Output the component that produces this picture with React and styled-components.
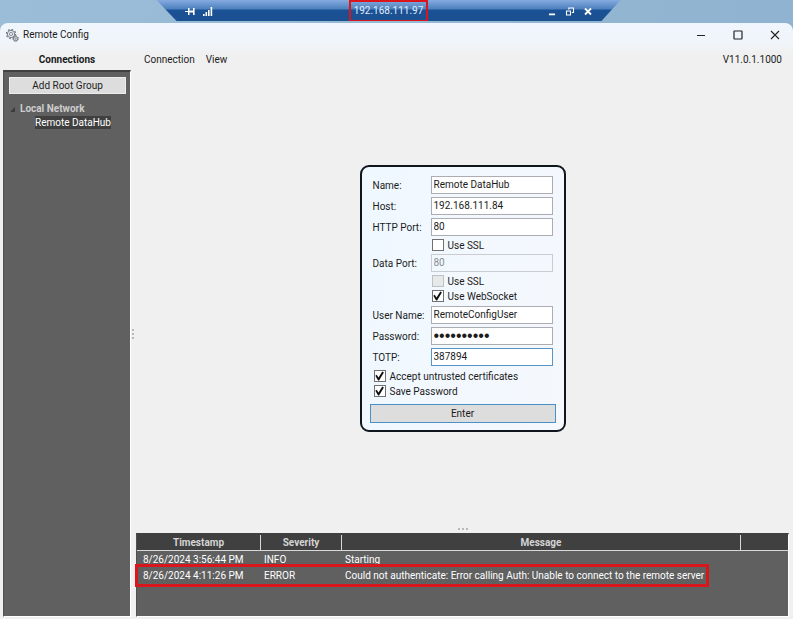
import styled, { createGlobalStyle } from "styled-components";

const GlobalStyle = createGlobalStyle`
    :root {
        --panel-gray: #606060;
        --head-gray: #404040;
        --app-gray: #f0f0f0;
        --mark-red: #d8161c;
        --text: #1c1c1c;
        --font: Roboto, "Open Sans", sans-serif;
    }

    * {
        box-sizing: border-box;
        margin: 0;
        padding: 0;
    }

    body {
        background: #98bbd5;
        color: var(--text);
        font-family: var(--font);
        font-size: 10px;
        line-height: 14px;
    }

    button, input {
        font: inherit;
        color: inherit;
    }
`

const Desktop = styled.div`
    display: flex;
    flex-direction: column;
    align-items: center;
    min-height: 100vh;
    background: linear-gradient(90deg, #9bbdd8, #8fb3d0);
`

const SessionBar = styled.header`
    display: grid;
    grid-template-columns: 1fr auto 1fr;
    align-items: center;
    width: 464px;
    height: 21px;
    margin-right: 16px;
    padding: 0 28px;
    color: #fff;
    background: linear-gradient(#86abe0, #4c80bd 9px, #1b5296 10px, #1b5090);
    clip-path: polygon(0 0, 100% 0, 445px 100%, 20px 100%);
`

const SessionTools = styled.div`
    display: flex;
    gap: 8px;
    justify-content: ${props => props.$end ? "flex-end" : "flex-start"};
`

const SessionButton = styled.button`
    display: flex;
    border: none;
    background: none;
`

const SessionAddress = styled.p`
    align-self: stretch;
    padding: 0 3px;
    border: 2px solid var(--mark-red);
    color: #e4eefb;
    line-height: 18px;
`

const Window = styled.div`
    display: flex;
    flex-direction: column;
    flex: 1;
    align-self: stretch;
    margin-top: 2px;
    border-radius: 8px 8px 0 0;
    background: linear-gradient(#f0f6fd, #f0f5fa 20px, var(--app-gray) 30px);
`

const TitleBar = styled.div`
    display: flex;
    align-items: center;
    gap: 4px;
    height: 24px;
    padding: 0 12px 0 6px;

    h1 {
        flex: 1;
        font-size: 10px;
        font-weight: 400;
    }
`

const WindowButton = styled.button`
    display: flex;
    justify-content: center;
    width: 12px;
    margin-left: 21px;
    border: none;
    background: none;
`

const Body = styled.div`
    display: grid;
    grid-template-columns: 128px 5px 1fr;
    flex: 1;
    padding: 0 4px 2px 3px;
`

const Sidebar = styled.aside`
    display: flex;
    flex-direction: column;

    h2 {
        height: 23px;
        font-size: 10px;
        line-height: 25px;
        text-align: center;
    }
`

const Tree = styled.div`
    flex: 1;
    padding: 5px 4px 0 5px;
    border-top: 2px solid var(--head-gray);
    border-right: 1px solid #fff;
    border-bottom: 1px solid #fff;
    border-left: 1px solid #505050;
    background: var(--panel-gray);
    color: #fff;
`

const RootButton = styled.button`
    width: 100%;
    height: 17px;
    border: 1px solid #ececec;
    background: #dddddd;
    color: var(--text);
    line-height: 15px;
`

const Group = styled.div`
    display: flex;
    align-items: center;
    gap: 4px;
    margin-top: 8px;
    color: #cdcdcd;
    font-weight: 700;
`

const TreeItem = styled.div`
    display: flex;
    padding-left: 26px;

    a {
        background: var(--head-gray);
        color: #fff;
        line-height: 13px;
        text-decoration: none;
    }
`

const Splitter = styled.div`
    display: flex;
    flex-direction: ${props => props.$vertical ? "column" : "row"};
    align-items: ${props => props.$vertical ? "flex-start" : "center"};
    justify-content: center;
    gap: 2px;
    height: ${props => props.$vertical ? "auto" : "9px"};
    padding: ${props => props.$vertical ? "4px 1px 0" : "0"};

    i {
        width: 2px;
        height: 2px;
        background: #b8b8b8;
    }
`

const Main = styled.main`
    display: flex;
    flex-direction: column;
    min-width: 0;
`

const MenuBar = styled.nav`
    display: flex;
    gap: 11px;
    height: 23px;
    padding: 0 7px 0 8px;
    line-height: 25px;

    button {
        border: none;
        background: none;
    }

    span {
        margin-left: auto;
    }
`

const Workspace = styled.div`
    display: flex;
    flex: 1;
    align-items: center;
    justify-content: center;
    padding-top: 2px;
`

const LoginForm = styled.form`
    width: 206px;
    padding: 8px 8px 7px;
    border: 2px solid #10161e;
    border-radius: 9px;
    background: linear-gradient(100deg, #eff8ff, #f5f8fd);
`

const FieldRow = styled.div`
    display: grid;
    grid-template-columns: 58px 122px;
    align-items: center;
    height: 21px;
    padding-left: 3px;

    label {
        padding-top: 2px;
    }
`

const TextInput = styled.input`
    height: 18px;
    padding: 0 2px 1px;
    border: 1px solid ${props => props.$active ? "#5795c9" : "#abadb3"};
    outline: none;
    background: #fff;

    &:disabled {
        border-color: #c9cdd2;
        background: transparent;
        color: #8a8d91;
    }

    &[type="password"] {
        padding-bottom: 0;
        font-family: "Liberation Sans", sans-serif;
        font-size: 16px;
    }
`

const CheckRow = styled.label`
    display: flex;
    align-items: center;
    gap: 4px;
    height: 15px;
    padding-left: ${props => props.$indent ? "62px" : "4px"};

    span {
        padding-top: 1px;
    }
`

const CheckBox = styled.input`
    display: flex;
    appearance: none;
    width: 12px;
    height: 12px;
    border: 1px solid #707070;
    background: #fff;

    &:checked::after {
        content: "";
        flex: 1;
        background: #111;
        clip-path: polygon(8% 48%, 22% 38%, 40% 64%, 78% 6%, 94% 14%, 46% 94%, 36% 94%);
    }

    &:disabled {
        border-color: #bfc2c5;
        background: #e6e8ea;
    }
`

const FormGroup = styled.div`
    margin-top: 1px;
`

const EnterButton = styled.button`
    display: block;
    width: 100%;
    height: 19px;
    margin-top: 5px;
    border: 1px solid #4a90c8;
    background: #dddddd;
    line-height: 17px;
`

const LogPanel = styled.section`
    height: 84px;
    border: 1px solid #fff;
    border-top: 2px solid var(--head-gray);
    border-left: 1px solid #505050;
    background: var(--panel-gray);
    color: #fff;
`

const LogTable = styled.table`
    width: 100%;
    border-collapse: separate;
    border-spacing: 0;
    table-layout: fixed;

    th {
        height: 16px;
        border-right: 1px solid #d8d8d8;
        border-bottom: 1px solid #d8d8d8;
        background: var(--head-gray);
        color: #d4d4d4;
        line-height: 15px;
    }

    th:last-child {
        border-right: none;
    }

    td {
        height: 16px;
        padding: 2px 0 0 3px;
        white-space: nowrap;
    }

    td:first-child {
        padding-left: 6px;
    }
`

const LogRow = styled.tr`
    position: relative;

    td:last-child::after {
        content: "";
        position: absolute;
        display: ${props => props.$marked ? "block" : "none"};
        inset: -3px 79px -4px -2px;
        border: 3px solid var(--mark-red);
    }
`

const LOG = [
    { time: "8/26/2024 3:56:44 PM", severity: "INFO", message: "Starting" },
    { time: "8/26/2024 4:11:26 PM", severity: "ERROR", message: "Could not authenticate: Error calling Auth: Unable to connect to the remote server" },
]

function Field({ id, label, ...rest }){
    return (
        <FieldRow>
            <label htmlFor={id}>{label}</label>
            <TextInput id={id} {...rest}/>
        </FieldRow>
    )
}

function Check({ label, indent, ...rest }){
    return (
        <CheckRow $indent={indent}>
            <CheckBox type="checkbox" {...rest}/>
            <span>{label}</span>
        </CheckRow>
    )
}

function Dots({ vertical }){
    return (
        <Splitter $vertical={vertical}>
            <i/><i/><i/>
        </Splitter>
    )
}

function GearsIcon(){
    return (
        <svg width="13" height="13" viewBox="0 0 13 13" fill="none" stroke="#6a7078">
            <circle cx="5" cy="5" r="3.6" strokeWidth="0.9"/>
            <circle cx="5" cy="5" r="4.6" strokeWidth="1.1" strokeDasharray="1.7 1.9"/>
            <circle cx="5" cy="5" r="1.6" strokeWidth="0.8"/>
            <circle cx="9.6" cy="9.6" r="2.1" strokeWidth="0.9" fill="#eef3f8"/>
            <circle cx="9.6" cy="9.6" r="2.8" strokeWidth="0.9" strokeDasharray="1.2 1"/>
            <circle cx="9.6" cy="9.6" r="0.7" strokeWidth="0.7"/>
        </svg>
    )
}

function Session(){
    return (
        <SessionBar>
            <SessionTools>
                <SessionButton aria-label="Pin">
                    <svg width="10" height="9" viewBox="0 0 10 9" fill="#fff">
                        <path d="M0 4h3v1H0zM3 1h1.5v7H3zM4 3.5h5v2H4zM8 1h1.6v7H8z"/>
                    </svg>
                </SessionButton>
                <SessionButton aria-label="Connection quality">
                    <svg width="10" height="9" viewBox="0 0 10 9" fill="#fff">
                        <path d="M0 7h1.6v2H0zM2.5 5h1.6v4H2.5zM5 3h1.6v6H5zM7.6 0h1.6v9H7.6z"/>
                    </svg>
                </SessionButton>
            </SessionTools>
            <SessionAddress>192.168.111.97</SessionAddress>
            <SessionTools $end>
                <SessionButton aria-label="Minimize session">
                    <svg width="10" height="9" viewBox="0 0 10 9"><path d="M2 6.5h6v1.8H2z" fill="#fff"/></svg>
                </SessionButton>
                <SessionButton aria-label="Restore session">
                    <svg width="10" height="9" viewBox="0 0 10 9" fill="none" stroke="#fff">
                        <path d="M1.5 4h4v4h-4zM3.8 2.6V1h4.7v4.5H6.8" strokeWidth="1.1"/>
                    </svg>
                </SessionButton>
                <SessionButton aria-label="Close session">
                    <svg width="10" height="9" viewBox="0 0 10 9" stroke="#fff" strokeWidth="1.8">
                        <path d="M2 1.5l6 6M8 1.5l-6 6"/>
                    </svg>
                </SessionButton>
            </SessionTools>
        </SessionBar>
    )
}

function Title(){
    return (
        <TitleBar>
            <GearsIcon/>
            <h1>Remote Config</h1>
            <WindowButton aria-label="Minimize">
                <svg width="10" height="10" viewBox="0 0 10 10" stroke="#222"><path d="M1 5.5h8"/></svg>
            </WindowButton>
            <WindowButton aria-label="Maximize">
                <svg width="10" height="10" viewBox="0 0 10 10" fill="none" stroke="#222" strokeWidth="1.2">
                    <rect x="1" y="1" width="8" height="8" rx="0.5"/>
                </svg>
            </WindowButton>
            <WindowButton aria-label="Close">
                <svg width="10" height="10" viewBox="0 0 10 10" stroke="#222" strokeWidth="1.1"><path d="M1 1l8 8M9 1L1 9"/></svg>
            </WindowButton>
        </TitleBar>
    )
}

function Connections(){
    return (
        <Sidebar>
            <h2>Connections</h2>
            <Tree>
                <RootButton>Add Root Group</RootButton>
                <Group>
                    <svg width="7" height="7" viewBox="0 0 7 7"><path d="M6 1v5H1z" fill="#3c3c3c"/></svg>
                    Local Network
                </Group>
                <TreeItem><a href="#datahub">Remote DataHub</a></TreeItem>
            </Tree>
        </Sidebar>
    )
}

function Login(){
    return (
        <LoginForm onSubmit={e => e.preventDefault()}>
            <Field id="name" label="Name:" defaultValue="Remote DataHub"/>
            <Field id="host" label="Host:" defaultValue="192.168.111.84"/>
            <Field id="http" label="HTTP Port:" defaultValue="80"/>
            <Check indent label="Use SSL"/>
            <Field id="data" label="Data Port:" defaultValue="80" disabled/>
            <Check indent label="Use SSL" disabled/>
            <Check indent label="Use WebSocket" defaultChecked/>
            <FormGroup>
                <Field id="user" label="User Name:" defaultValue="RemoteConfigUser"/>
                <Field id="password" label="Password:" type="password" defaultValue="datahub123"/>
                <Field id="totp" label="TOTP:" defaultValue="387894" $active/>
            </FormGroup>
            <FormGroup>
                <Check label="Accept untrusted certificates" defaultChecked/>
                <Check label="Save Password" defaultChecked/>
            </FormGroup>
            <EnterButton>Enter</EnterButton>
        </LoginForm>
    )
}

function Log(){
    return (
        <LogPanel>
            <LogTable>
                <colgroup>
                    <col width="124"/>
                    <col width="81"/>
                    <col/>
                    <col width="47"/>
                </colgroup>
                <thead>
                    <tr>
                        <th>Timestamp</th>
                        <th>Severity</th>
                        <th>Message</th>
                        <th></th>
                    </tr>
                </thead>
                <tbody>
                    {LOG.map(row => (
                        <LogRow key={row.time} $marked={row.severity === "ERROR"}>
                            <td>{row.time}</td>
                            <td>{row.severity}</td>
                            <td colSpan="2">{row.message}</td>
                        </LogRow>
                    ))}
                </tbody>
            </LogTable>
        </LogPanel>
    )
}

export default function App(){
    return (
        <>
            <GlobalStyle/>
            <Desktop>
                <Session/>
                <Window>
                    <Title/>
                    <Body>
                        <Connections/>
                        <Dots vertical/>
                        <Main>
                            <MenuBar>
                                <button>Connection</button>
                                <button>View</button>
                                <span>V11.0.1.1000</span>
                            </MenuBar>
                            <Workspace>
                                <Login/>
                            </Workspace>
                            <Dots/>
                            <Log/>
                        </Main>
                    </Body>
                </Window>
            </Desktop>
        </>
    )
}
